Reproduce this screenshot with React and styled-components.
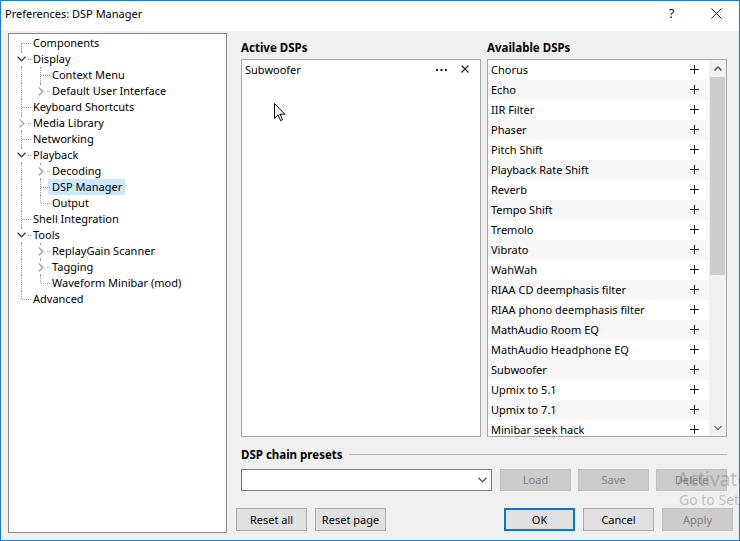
import React from 'react';
import styled, { createGlobalStyle } from 'styled-components';

const GlobalStyle = createGlobalStyle`
  html, body {
    margin: 0;
    padding: 0;
    background: #ffffff;
  }
  body {
    font-family: "Noto Sans", "Open Sans", sans-serif;
    font-size: 11px;
    color: #000;
  }
  * { box-sizing: border-box; }
`;

const Window = styled.div`
  position: relative;
  width: 740px;
  height: 541px;
  border: 1px solid #1c7ad3;
  display: flex;
  flex-direction: column;
  overflow: hidden;
  background: #f0f0f0;
`;

const TitleBar = styled.div`
  height: 30px;
  flex: none;
  display: flex;
  align-items: center;
  background: #ffffff;
  padding: 0 0 6px 4px;
`;

const TitleText = styled.div`
  flex: 1;
  font-size: 11px;
  color: #000;
`;

const TitleButton = styled.div`
  width: 45px;
  height: 24px;
  display: flex;
  align-items: center;
  justify-content: center;
  font-size: 13px;
  color: #111;
`;

const Body = styled.div`
  flex: 1;
  display: flex;
  gap: 9px;
  padding: 2px 6px 7px 7px;
`;

/* ---------- tree ---------- */

const Tree = styled.div`
  width: 219px;
  height: 500px;
  flex: none;
  background: #ffffff;
  border: 1px solid #828790;
  padding: 1px 0 0 3px;
`;

const TreeRow = styled.div`
  display: flex;
  height: 16px;
  align-items: center;
`;

const Cell = styled.span`
  position: relative;
  width: 19px;
  height: 16px;
  flex: none;

  &::before {
    content: '';
    display: ${p => (p.$top || p.$bottom ? 'block' : 'none')};
    position: absolute;
    left: 9px;
    top: ${p => (p.$top ? 0 : 8)}px;
    bottom: ${p => (p.$bottom ? 0 : 8)}px;
    border-left: 1px dotted #a0a0a0;
  }
  &::after {
    content: '';
    display: ${p => (p.$elbow ? 'block' : 'none')};
    position: absolute;
    left: 10px;
    right: 0;
    top: 8px;
    border-top: 1px dotted #a0a0a0;
  }
`;

const Expander = styled.span`
  position: absolute;
  z-index: 1;
  left: 3px;
  top: 2px;
  width: 13px;
  height: 12px;
  background: #ffffff;
  display: flex;
  align-items: center;
  justify-content: center;
`;

const TreeLabel = styled.span`
  margin-left: -2px;
  padding: 0 3px 0 4px;
  height: 16px;
  line-height: 16px;
  white-space: nowrap;
  background: ${p => (p.$selected ? '#cce8ff' : 'transparent')};
`;

/* ---------- right side ---------- */

const RightPane = styled.div`
  flex: 1;
  display: flex;
  flex-direction: column;
`;

const Columns = styled.div`
  display: grid;
  grid-template-columns: 1fr 1fr;
  gap: 6px;
  padding: 6px 6px 0 5px;
`;

const Column = styled.div`
  display: flex;
  flex-direction: column;
`;

const SectionLabel = styled.div`
  font-weight: 700;
  font-size: 11.5px;
  line-height: 16px;
  height: 20px;
  padding-top: 1px;
  white-space: nowrap;
`;

const ListBox = styled.div`
  position: relative;
  height: 378px;
  background: #ffffff;
  border: 1px solid #a8a8a8;
  display: flex;
  overflow: hidden;
`;

const ListRows = styled.div`
  flex: 1;
  display: flex;
  flex-direction: column;
`;

const ListRow = styled.div`
  height: 20px;
  flex: none;
  display: flex;
  align-items: center;
  padding: 0 7px 2px 3px;
  background: ${p => (p.$striped ? '#f7f7f7' : '#ffffff')};
`;

const RowText = styled.span`
  flex: 1;
  white-space: nowrap;
`;

const RowIcon = styled.span`
  width: 16px;
  height: 16px;
  display: flex;
  align-items: center;
  justify-content: center;
  margin-left: ${p => p.$gap || 0}px;
`;

const ScrollBar = styled.div`
  width: 17px;
  flex: none;
  background: #f0f0f0;
  display: flex;
  flex-direction: column;
`;

const ScrollArrow = styled.div`
  height: 17px;
  flex: none;
  display: flex;
  align-items: center;
  justify-content: center;
`;

const ScrollThumb = styled.div`
  height: 198px;
  margin: 0 1px;
  background: #cdcdcd;
`;

const ScrollTrack = styled.div`
  flex: 1;
`;

const PresetHeader = styled.div`
  display: flex;
  align-items: center;
  margin-top: 9px;
  height: 16px;
  padding: 0 6px 0 5px;
`;

const HeaderRule = styled.div`
  flex: 1;
  height: 1px;
  margin-left: 6px;
  background: #b9b9b9;
`;

const PresetRow = styled.div`
  display: flex;
  gap: 7px;
  margin-top: 7px;
  height: 22px;
  padding: 0 6px 0 5px;
`;

const Combo = styled.div`
  width: 251px;
  height: 22px;
  margin-right: 1px;
  background: #ffffff;
  border: 1px solid #7a7a7a;
  display: flex;
  align-items: center;
  justify-content: flex-end;
  padding-right: 4px;
`;

const Button = styled.div`
  width: 71px;
  height: ${p => p.$h || 23}px;
  flex: none;
  display: flex;
  align-items: center;
  justify-content: center;
  padding-bottom: 1px;
  font-size: 11px;
  background: ${p => (p.$disabled ? '#cccccc' : '#e1e1e1')};
  color: ${p => (p.$disabled ? '#838383' : '#000')};
  border: ${p => (p.$default ? '2px solid #0078d7' : p.$disabled ? '1px solid #bfbfbf' : '1px solid #adadad')};
`;

const ButtonRow = styled.div`
  display: flex;
  gap: 8px;
  margin-top: 17px;
`;

const Spacer = styled.div`
  flex: 1;
`;

/* ---------- overlays ---------- */

const Cursor = styled.svg`
  position: absolute;
  left: 272px;
  top: 101px;
`;

const Watermark = styled.div`
  position: absolute;
  left: 676px;
  top: 466px;
  color: rgba(120, 120, 120, 0.42);
  white-space: nowrap;
  pointer-events: none;
`;

const WatermarkBig = styled.div`
  font-size: 19px;
  line-height: 24px;
`;

const WatermarkSmall = styled.div`
  font-size: 14px;
  line-height: 18px;
  margin-left: 2px;
`;

/* ---------- icons ---------- */

const ChevronDown = ({ color = '#404040', w = 9 }) => (
  <svg width={w} height="6" viewBox="0 0 9 6">
    <path d="M0.5 0.8 L4.5 4.8 L8.5 0.8" fill="none" stroke={color} strokeWidth="1.3" />
  </svg>
);

const ChevronRight = ({ color = '#a6a6a6' }) => (
  <svg width="6" height="9" viewBox="0 0 6 9">
    <path d="M0.8 0.5 L4.8 4.5 L0.8 8.5" fill="none" stroke={color} strokeWidth="1.3" />
  </svg>
);

const ChevronUp = ({ color = '#606060' }) => (
  <svg width="8" height="5" viewBox="0 0 8 5">
    <path d="M0.5 4.5 L4 1 L7.5 4.5" fill="none" stroke={color} strokeWidth="1.6" />
  </svg>
);

const PlusIcon = () => (
  <svg width="9" height="9" viewBox="0 0 9 9">
    <path d="M4.5 0 V9 M0 4.5 H9" stroke="#202020" strokeWidth="1.1" />
  </svg>
);

const CloseIcon = ({ size = 8, stroke = 1.1 }) => (
  <svg width={size} height={size} viewBox={`0 0 ${size} ${size}`}>
    <path d={`M0.5 0.5 L${size - 0.5} ${size - 0.5} M${size - 0.5} 0.5 L0.5 ${size - 0.5}`} stroke="#202020" strokeWidth={stroke} />
  </svg>
);

const DotsIcon = () => (
  <svg width="11" height="4" viewBox="0 0 11 4">
    <rect x="0" y="2" width="2" height="2" fill="#202020" />
    <rect x="4.5" y="2" width="2" height="2" fill="#202020" />
    <rect x="9" y="2" width="2" height="2" fill="#202020" />
  </svg>
);

/* ---------- data ---------- */

const TREE = [
  { label: 'Components', level: 0, first: true },
  { label: 'Display', level: 0, open: true },
  { label: 'Context Menu', level: 1 },
  { label: 'Default User Interface', level: 1, closed: true, last: true },
  { label: 'Keyboard Shortcuts', level: 0 },
  { label: 'Media Library', level: 0, closed: true },
  { label: 'Networking', level: 0 },
  { label: 'Playback', level: 0, open: true },
  { label: 'Decoding', level: 1, closed: true },
  { label: 'DSP Manager', level: 1, selected: true },
  { label: 'Output', level: 1, last: true },
  { label: 'Shell Integration', level: 0 },
  { label: 'Tools', level: 0, open: true },
  { label: 'ReplayGain Scanner', level: 1, closed: true },
  { label: 'Tagging', level: 1, closed: true },
  { label: 'Waveform Minibar (mod)', level: 1, last: true },
  { label: 'Advanced', level: 0, last: true },
];

const AVAILABLE = [
  'Chorus',
  'Echo',
  'IIR Filter',
  'Phaser',
  'Pitch Shift',
  'Playback Rate Shift',
  'Reverb',
  'Tempo Shift',
  'Tremolo',
  'Vibrato',
  'WahWah',
  'RIAA CD deemphasis filter',
  'RIAA phono deemphasis filter',
  'MathAudio Room EQ',
  'MathAudio Headphone EQ',
  'Subwoofer',
  'Upmix to 5.1',
  'Upmix to 7.1',
  'Minibar seek hack',
];

function TreeItem({ item }) {
  const own = (
    <Cell $top={!item.first} $bottom={!item.last} $elbow>
      {item.open && (
        <Expander>
          <ChevronDown />
        </Expander>
      )}
      {item.closed && (
        <Expander>
          <ChevronRight />
        </Expander>
      )}
    </Cell>
  );
  return (
    <TreeRow>
      {item.level === 1 && <Cell $top $bottom />}
      {own}
      <TreeLabel $selected={item.selected}>{item.label}</TreeLabel>
    </TreeRow>
  );
}

export default function App() {
  return (
    <>
      <GlobalStyle />
      <Window>
        <TitleBar>
          <TitleText>Preferences: DSP Manager</TitleText>
          <TitleButton>?</TitleButton>
          <TitleButton>
            <CloseIcon size={11} stroke={1} />
          </TitleButton>
        </TitleBar>
        <Body>
          <Tree>
            {TREE.map(item => (
              <TreeItem key={item.label} item={item} />
            ))}
          </Tree>
          <RightPane>
            <Columns>
              <Column>
                <SectionLabel>Active DSPs</SectionLabel>
                <ListBox>
                  <ListRows>
                    <ListRow>
                      <RowText>Subwoofer</RowText>
                      <RowIcon><DotsIcon /></RowIcon>
                      <RowIcon $gap={8}><CloseIcon size={8} /></RowIcon>
                    </ListRow>
                  </ListRows>
                </ListBox>
              </Column>
              <Column>
                <SectionLabel>Available DSPs</SectionLabel>
                <ListBox>
                  <ListRows>
                    {AVAILABLE.map((name, i) => (
                      <ListRow key={name} $striped={i % 2 === 1}>
                        <RowText>{name}</RowText>
                        <RowIcon><PlusIcon /></RowIcon>
                      </ListRow>
                    ))}
                  </ListRows>
                  <ScrollBar>
                    <ScrollArrow><ChevronUp /></ScrollArrow>
                    <ScrollThumb />
                    <ScrollTrack />
                    <ScrollArrow><ChevronDown color="#606060" w={8} /></ScrollArrow>
                  </ScrollBar>
                </ListBox>
              </Column>
            </Columns>
            <PresetHeader>
              <SectionLabel as="span" style={{ height: 16 }}>DSP chain presets</SectionLabel>
              <HeaderRule />
            </PresetHeader>
            <PresetRow>
              <Combo>
                <ChevronDown color="#555" w={9} />
              </Combo>
              <Button $disabled $h={22}>Load</Button>
              <Button $disabled $h={22}>Save</Button>
              <Button $disabled $h={22}>Delete</Button>
            </PresetRow>
            <ButtonRow>
              <Button>Reset all</Button>
              <Button>Reset page</Button>
              <Spacer />
              <Button $default>OK</Button>
              <Button>Cancel</Button>
              <Button $disabled>Apply</Button>
            </ButtonRow>
          </RightPane>
        </Body>
        <Cursor width="13" height="20" viewBox="0 0 13 20">
          <path d="M1.5 1.5 L1.5 16.5 L5 13 L7.6 18.6 L9.6 17.7 L7 12.2 L11.8 12.2 Z" fill="#ffffff" stroke="#000" strokeWidth="1" strokeLinejoin="miter" />
        </Cursor>
        <Watermark>
          <WatermarkBig>Activate Windows</WatermarkBig>
          <WatermarkSmall>Go to Settings to activate Windows.</WatermarkSmall>
        </Watermark>
      </Window>
    </>
  );
}
